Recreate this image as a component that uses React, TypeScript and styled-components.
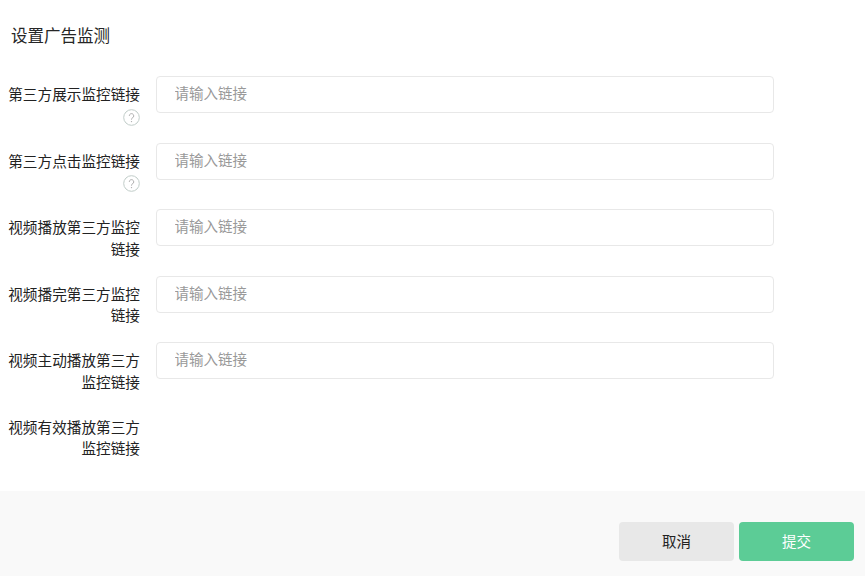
import React from "react";
import styled, { createGlobalStyle } from "styled-components";

const Global = createGlobalStyle`
  html, body { margin: 0; padding: 0; background: #fff; }
  body { font-family: "Liberation Sans", "Noto Sans CJK SC", sans-serif; }
`;

const Page = styled.div`
  width: 865px;
  height: 576px;
  display: flex;
  flex-direction: column;
  overflow: hidden;
`;

const Body = styled.div`
  flex: 1;
  padding: 27px 0 0 0;
`;

const Title = styled.h2`
  margin: 0 0 30px 11px;
  font-size: 16.5px;
  line-height: 19px;
  font-weight: 400;
  color: #262626;
`;

const Rows = styled.div`
  display: flex;
  flex-direction: column;
`;

const Row = styled.div`
  display: flex;
  height: 66.5px;
  align-items: flex-start;
`;

const Label = styled.div`
  width: 133px;
  margin-left: 7px;
  margin-right: 16px;
  padding-top: 9px;
  text-align: right;
  font-size: 14.65px;
  line-height: 21.5px;
  color: #222;
`;

const HelpIcon = styled.svg`
  display: block;
  margin: 2px 0 0 auto;
  width: 17px;
  height: 17px;
`;

const Input = styled.input`
  box-sizing: border-box;
  width: 618px;
  height: 37px;
  padding: 0 18px 1px 17.5px;
  border: 1px solid #e8e8e8;
  border-radius: 4px;
  outline: none;
  font-family: inherit;
  font-size: 14.5px;
  color: #333;
  &::placeholder { color: #999; opacity: 1; }
`;

const Footer = styled.div`
  height: 85px;
  box-sizing: border-box;
  background: #f9f9f9;
  display: flex;
  justify-content: flex-end;
  align-items: flex-start;
  gap: 5px;
  padding: 31px 11px 0 0;
`;

const Button = styled.button<{ $primary?: boolean }>`
  width: 115px;
  height: 39px;
  padding: 0 0 2px;
  border: none;
  border-radius: 4px;
  font-family: inherit;
  font-size: 14.5px;
  background: ${(p) => (p.$primary ? "#5ccc96" : "#e8e8e8")};
  color: ${(p) => (p.$primary ? "#fff" : "#222")};
`;

const Help = () => (
  <HelpIcon viewBox="0 0 17 17" fill="none">
    <circle cx="8.5" cy="8.5" r="7.8" stroke="#c0ccc8" strokeWidth="1" />
    <path d="M6.3 6.8a2.2 2.2 0 1 1 3.4 1.9c-.8.5-1.2.9-1.2 1.9" stroke="#aaa" strokeWidth="1" />
    <circle cx="8.5" cy="12.6" r=".7" fill="#aaa" />
  </HelpIcon>
);

const rows = [
  { label: "第三方展示监控链接", help: true, input: true },
  { label: "第三方点击监控链接", help: true, input: true },
  { label: "视频播放第三方监控链接", input: true },
  { label: "视频播完第三方监控链接", input: true },
  { label: "视频主动播放第三方监控链接", input: true },
  { label: "视频有效播放第三方监控链接", input: false },
];

export default function App() {
  return (
    <Page>
      <Global />
      <Body>
        <Title>设置广告监测</Title>
        <Rows>
          {rows.map((r) => (
            <Row key={r.label}>
              <Label>
                {r.label}
                {r.help && <Help />}
              </Label>
              {r.input && <Input placeholder="请输入链接" />}
            </Row>
          ))}
        </Rows>
      </Body>
      <Footer>
        <Button>取消</Button>
        <Button $primary>提交</Button>
      </Footer>
    </Page>
  );
}
